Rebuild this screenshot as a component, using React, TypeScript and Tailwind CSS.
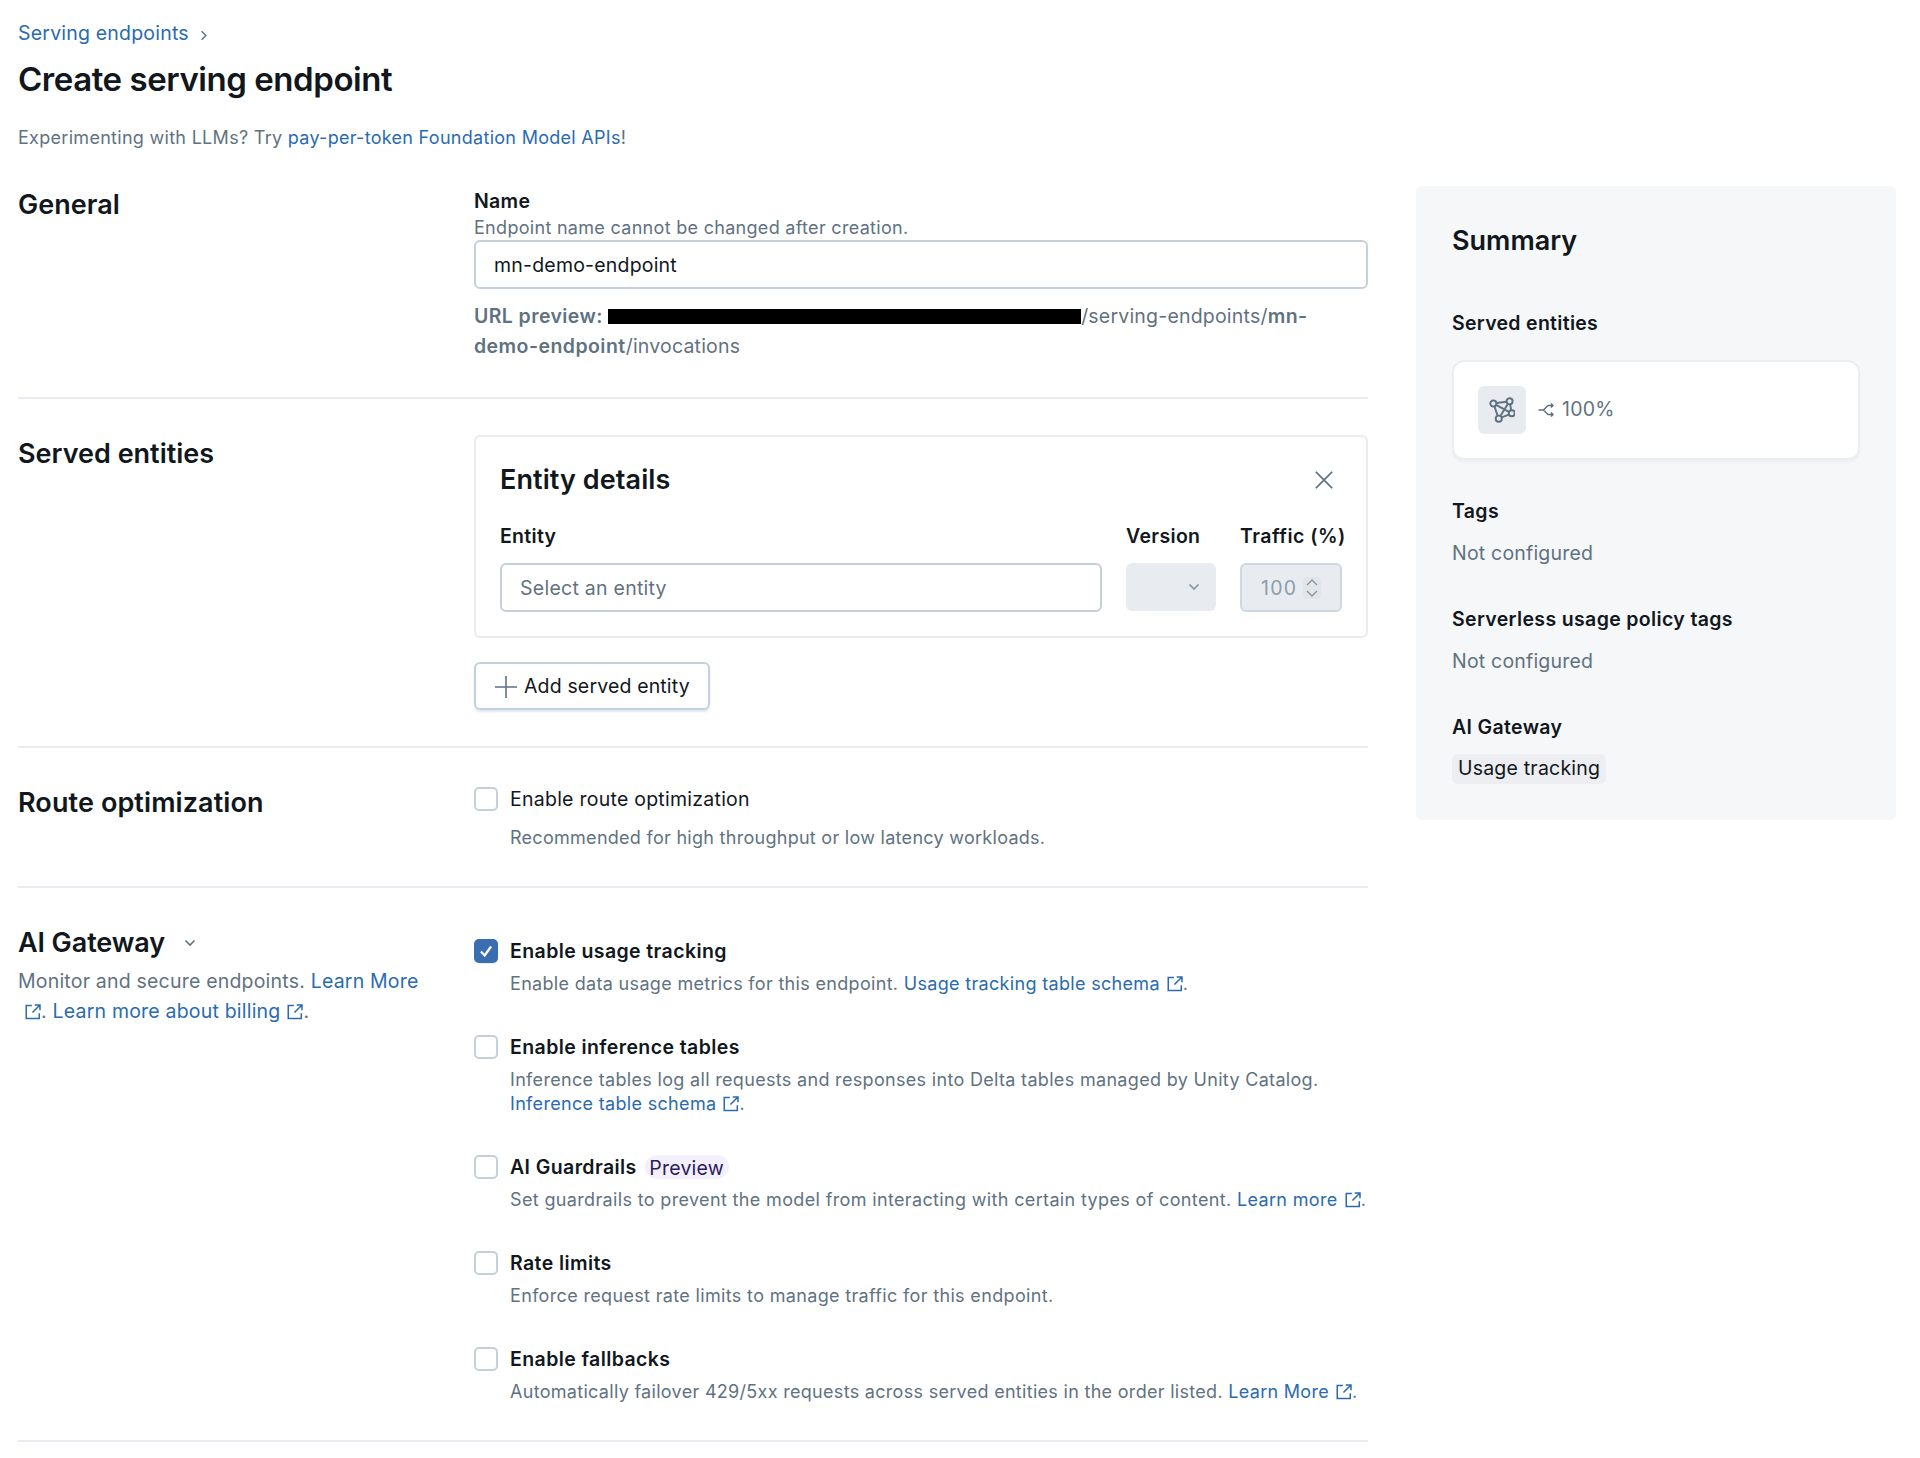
import React from "react";

const Ext = () => (
  <svg viewBox="0 0 16 16" className="inline-block w-[18px] h-[18px] ml-[6px] mr-[-1px] align-[-3px]" fill="none" stroke="#2a6bb0" strokeWidth="1.35">
    <path d="M7 2.2H2v11.6h11.6V9" />
    <path d="M7.5 8.5 13.5 2.5M9.5 1.8h4.7v4.7" />
  </svg>
);

const A = ({ children }: { children: React.ReactNode }) => <span className="text-[#2a6bb0]">{children}</span>;

const Check = ({ on }: { on?: boolean }) =>
  on ? (
    <span className="shrink-0 w-6 h-6 rounded-[5px] bg-[#3a6eb0] flex items-center justify-center shadow-[0_1px_0_#e8ecf0]">
      <svg viewBox="0 0 16 16" className="w-[18px] h-[18px]" fill="none" stroke="#fff" strokeWidth="2">
        <path d="M3.5 8.5 6.8 12l5.7-8" />
      </svg>
    </span>
  ) : (
    <span className="shrink-0 w-6 h-6 rounded-[5px] bg-white border-2 border-[#c5d0da]" />
  );

const Opt = ({ on, title, children, last, badge }: { on?: boolean; title: string; children: React.ReactNode; last?: boolean; badge?: boolean }) => (
  <div className={`flex gap-3 ${last ? "" : "mb-[39px]"}`}>
    <Check on={on} />
    <div className="min-w-0">
      <div className="-mt-[3px] h-[30px] leading-[30px] text-[19.5px] tracking-[0.4px] text-[#11171c] flex items-center font-semibold">
        {title}
        {badge && (
          <span className="ml-[8px] h-6 w-[84px] pt-[2px] flex items-center justify-center rounded-full bg-[#f4f0fb] text-[#2a1a63] font-normal tracking-[0.2px]">Preview</span>
        )}
      </div>
      <div className="mt-[6px] text-[18px] leading-6 tracking-[0.32px] text-[#5f7281]">{children}</div>
    </div>
  </div>
);

export default function App() {
  return (
    <div className="bg-white min-h-[1458px] pl-[18px] pt-[18px] text-[#11171c] [font-family:Inter,'Liberation_Sans',sans-serif]">
      <div className="h-[168px]">
        <div className="h-[30px] leading-[30px] text-[19.5px] tracking-[0.2px] text-[#2a6bb0] flex items-center">
          Serving endpoints
          <svg viewBox="0 0 16 16" className="w-[15px] h-[15px] ml-[7px] mt-[4px]" fill="none" stroke="#5f7281" strokeWidth="1.5"><path d="M6 3.5 10.5 8 6 12.5" /></svg>
        </div>
        <h1 className="mt-[10px] text-[33px] leading-[42px] font-semibold tracking-[-0.45px]">Create serving endpoint</h1>
        <p className="mt-[24px] text-[18px] leading-[27px] tracking-[0.29px] text-[#5f7281]">
          Experimenting with LLMs? Try <A>pay-per-token Foundation Model APIs</A>!
        </p>
      </div>
      <div className="flex items-start">
        <main className="w-[1350px]">
          <section className="grid grid-cols-[456px_894px] pb-9 border-b-2 border-[#e8ecf0]">
            <h2 className="pt-[1px] text-[27px] leading-9 font-semibold">General</h2>
            <div>
              <div className="text-[19.5px] leading-[30px] font-semibold tracking-[0.3px]">Name</div>
              <div className="text-[18px] leading-6 tracking-[0.3px] text-[#5f7281]">Endpoint name cannot be changed after creation.</div>
              <div className="h-[49px] rounded-[6px] border-2 border-[#c5d0da] px-[18px] pt-[2px] flex items-center text-[19.5px] tracking-[0.2px]">mn-demo-endpoint</div>
              <p className="mt-3 text-[19.5px] leading-[30px] tracking-[0.2px] text-[#5f7281]">
                <b className="font-semibold tracking-[0.4px]">URL preview: </b>
                <span className="inline-block w-[473px] h-[15px] bg-black align-[-1px]" />
                /serving-endpoints/<b className="font-semibold tracking-[0.45px]">mn-demo-endpoint</b>/invocations
              </p>
            </div>
          </section>

          <section className="grid grid-cols-[456px_894px] pt-9 pb-9 border-b-2 border-[#e8ecf0]">
            <h2 className="pt-[1px] text-[27px] leading-9 font-semibold">Served entities</h2>
            <div>
              <div className="rounded-[6px] border-2 border-[#e8ecf0] pt-[25px] pb-[24px] pl-[24px] pr-[21px]">
                <div className="flex items-center justify-between h-9 pr-[11px]">
                  <h3 className="text-[27px] leading-9 font-semibold tracking-[0.08px]">Entity details</h3>
                  <svg viewBox="0 0 16 16" className="w-[20px] h-[20px]" fill="none" stroke="#5f7281" strokeWidth="1.3"><path d="M1.5 1.5 14.5 14.5M14.5 1.5 1.5 14.5" /></svg>
                </div>
                <div className="mt-[23px] grid grid-cols-[602px_90px_102px] gap-x-[24px]">
                  <div className="text-[19.5px] leading-[30px] font-semibold tracking-[0.3px]">Entity</div>
                  <div className="text-[19.5px] leading-[30px] font-semibold tracking-[0.35px] whitespace-nowrap">Version</div>
                  <div className="text-[19.5px] leading-[30px] font-semibold tracking-[0.48px] whitespace-nowrap">Traffic (%)</div>
                  <div className="mt-3 h-[49px] rounded-[6px] border-2 border-[#c5d0da] px-[18px] pt-[2px] flex items-center text-[19.5px] tracking-[0.26px] text-[#5f7281]">Select an entity</div>
                  <div className="mt-3 h-[48px] rounded-[6px] bg-[#e8ecf0] flex items-center justify-end pr-[14px]">
                    <svg viewBox="0 0 16 16" className="w-[16px] h-[16px]" fill="none" stroke="#8296a6" strokeWidth="1.7"><path d="M3.5 5.5 8 10l4.5-4.5" /></svg>
                  </div>
                  <div className="mt-3 h-[49px] rounded-[6px] bg-[#e8ecf0] border-2 border-[#cfd8e1] flex items-center pl-[19px] pt-[2px] text-[19.5px] tracking-[1.2px] text-[#8c9dab]">
                    100
                    <span className="ml-[6px] -mt-[2px] w-[18px] h-[22px] rounded-[4px] bg-[#e2e6ea] flex items-center justify-center">
                      <svg viewBox="0 0 16 20" className="w-[16px] h-[20px]" fill="none" stroke="#8296a6" strokeWidth="1.4"><path d="M3 7 8 2l5 5M3 13l5 5 5-5" /></svg>
                    </span>
                  </div>
                </div>
              </div>
              <div className="mt-[24px] w-[236px] h-[48px] pt-[1px] rounded-[6px] border-2 border-[#c5d0da] shadow-[0_2px_2px_rgba(200,210,220,0.5)] flex items-center pl-[19px] text-[19.5px] tracking-[0.15px]">
                <svg viewBox="0 0 22 22" className="w-[22px] h-[22px] mr-[7px]" fill="none" stroke="#5f7281" strokeWidth="1.6"><path d="M11 0v22M0 11h22" /></svg>
                Add served entity
              </div>
            </div>
          </section>

          <section className="grid grid-cols-[456px_894px] pt-[37px] pb-9 border-b-2 border-[#e8ecf0]">
            <h2 className="text-[27px] leading-9 font-semibold tracking-[0.1px]">Route optimization</h2>
            <div className="pt-[2px]">
              <div className="flex gap-3">
                <Check />
                <div>
                  <div className="-mt-[3px] h-[30px] leading-[30px] text-[19.5px] tracking-[0.25px]">Enable route optimization</div>
                  <div className="mt-3 text-[18px] leading-6 tracking-[0.28px] text-[#5f7281]">Recommended for high throughput or low latency workloads.</div>
                </div>
              </div>
            </div>
          </section>

          <section className="grid grid-cols-[456px_894px] pt-[37px] pb-9 border-b-2 border-[#e8ecf0]">
            <div>
              <div className="flex items-center">
                <h2 className="text-[27px] leading-9 font-semibold tracking-[-0.1px]">AI Gateway</h2>
                <svg viewBox="0 0 16 16" className="w-[16px] h-[16px] ml-[17px]" fill="none" stroke="#5f7281" strokeWidth="1.6"><path d="M3.5 5.5 8 10l4.5-4.5" /></svg>
              </div>
              <p className="mt-[5px] w-[410px] text-[19.5px] leading-[30px] tracking-[0.2px] text-[#5f7281]">
                Monitor and secure endpoints. <A>Learn More<Ext /></A>. <A>Learn more about billing<Ext /></A>.
              </p>
            </div>
            <div className="pt-[14px]">
              <Opt on title="Enable usage tracking">
                Enable data usage metrics for this endpoint. <A>Usage tracking table schema<Ext /></A>.
              </Opt>
              <Opt title="Enable inference tables">
                Inference tables log all requests and responses into Delta tables managed by Unity Catalog.<br />
                <A>Inference table schema<Ext /></A>.
              </Opt>
              <Opt title="AI Guardrails" badge>
                <span className="tracking-[0.35px]">Set guardrails to prevent the model from interacting with certain types of content. <A>Learn more<Ext /></A>.</span>
              </Opt>
              <Opt title="Rate limits"><span className="tracking-[0.34px]">Enforce request rate limits to manage traffic for this endpoint.</span></Opt>
              <Opt last title="Enable fallbacks">
                <span className="tracking-[0.3px]">Automatically failover 429/5xx requests across served entities in the order listed. <A>Learn More<Ext /></A>.</span>
              </Opt>
            </div>
          </section>
        </main>

        <aside className="ml-[48px] w-[480px] h-[634px] rounded-[6px] bg-[#f6f7f9] pt-9 px-9">
          <h2 className="pt-[1px] -mb-[1px] text-[27px] leading-9 font-semibold">Summary</h2>
          <div className="mt-[50px] text-[19.5px] leading-[30px] font-semibold tracking-[0.3px]">Served entities</div>
          <div className="mt-[22px] h-[100px] rounded-[12px] bg-white border-2 border-[#eceef2] shadow-[0_2px_3px_rgba(0,0,0,0.04)] flex items-center pl-[24px]">
            <span className="w-12 h-12 rounded-[6px] bg-[#e8ecf0] flex items-center justify-center">
              <svg viewBox="0 0 24 24" className="w-[26px] h-[26px]" fill="none" stroke="#5f7281" strokeWidth="1.8">
                <circle cx="4" cy="6" r="2.8" /><circle cx="19" cy="4" r="2.8" /><circle cx="21" cy="15" r="2.8" /><circle cx="9" cy="20" r="2.8" />
                <path d="M6.5 7.3 18.5 13.7M6.8 5.6 16.2 4.4M5 8.7 8 17.3M19.5 6.8 20.5 12.2M17.5 6.3 10.5 17.6M18.5 16.2 11.5 18.8" />
              </svg>
            </span>
            <svg viewBox="0 0 16 14" className="w-[16px] h-[14px] ml-[12px] mr-[8px]" fill="none" stroke="#5f7281" strokeWidth="1.5">
              <path d="M0.5 7H5.5L10 2.5H15M5.5 7 10 11.5H15M13 0.5l2 2-2 2M13 9.5l2 2-2 2" />
            </svg>
            <span className="text-[19.5px] tracking-[0.2px] text-[#5f7281]">100%</span>
          </div>
          <div className="mt-9 text-[19.5px] leading-[30px] font-semibold tracking-[0.35px]">Tags</div>
          <div className="mt-3 text-[19.5px] leading-[30px] tracking-[0.2px] text-[#5f7281]">Not configured</div>
          <div className="mt-9 text-[19.5px] leading-[30px] font-semibold tracking-[0.35px]">Serverless usage policy tags</div>
          <div className="mt-3 text-[19.5px] leading-[30px] tracking-[0.2px] text-[#5f7281]">Not configured</div>
          <div className="mt-9 text-[19.5px] leading-[30px] font-semibold tracking-[0.35px]">AI Gateway</div>
          <span className="mt-3 inline-flex h-[30px] items-center rounded-[6px] bg-[#eceef1] px-[6px] text-[19.5px] tracking-[0.2px]">Usage tracking</span>
        </aside>
      </div>
    </div>
  );
}
